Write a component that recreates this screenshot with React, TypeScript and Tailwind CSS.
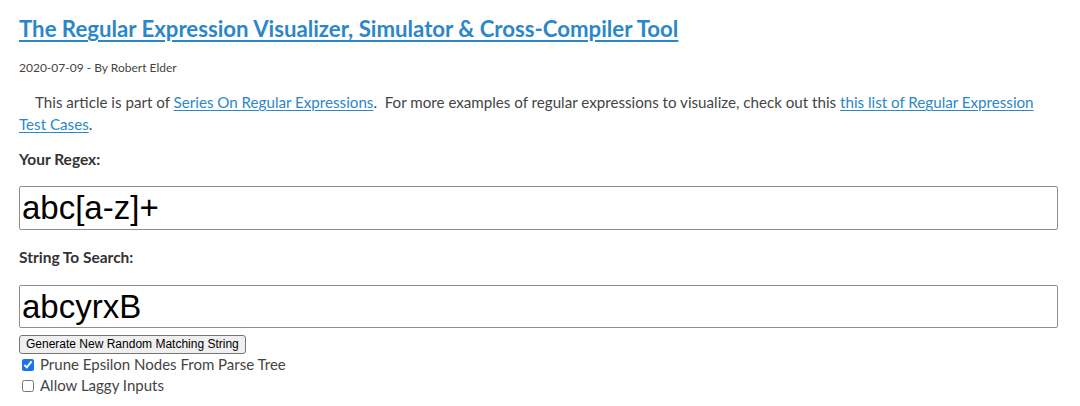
import React from "react";

export default function App() {
  const body = { fontFamily: "Lato, 'Noto Sans', sans-serif" };
  return (
    <div className="w-[1080px] h-[406px] bg-white overflow-hidden pl-[19px] pr-[23px] text-[#444]" style={body}>
      <h1 className="pt-[12px] text-[22.2px] leading-[34px] font-bold">
        <a href="#" className="text-[#2b87c8] underline underline-offset-[3px] decoration-[1.5px]">
          The Regular Expression Visualizer, Simulator &amp; Cross-Compiler Tool
        </a>
      </h1>
      <div className="mt-[14px] text-[12px] leading-[16px] text-[#444]">2020-07-09 - By Robert Elder</div>
      <p className="mt-[15px] text-[15.15px] leading-[22px] indent-[16px] text-[#444]">
        This article is part of{" "}
        <a href="#" className="text-[#2b87c8] underline underline-offset-2">Series On Regular Expressions</a>.&nbsp; For more examples of regular expressions to visualize, check out this{" "}
        <a href="#" className="text-[#2b87c8] underline underline-offset-2">this list of Regular Expression Test Cases</a>.
      </p>
      <div className="mt-[14px] text-[15.5px] leading-[20px] font-bold text-[#333]">Your Regex:</div>
      <input
        readOnly
        value="abc[a-z]+"
        className="mt-[17px] block w-[1039px] h-[44px] border border-[#8f8f8f] rounded-[2px] px-[2px] text-[33px] text-black outline-none"
        style={{ fontFamily: "'Liberation Sans', Arial, sans-serif" }}
      />
      <div className="mt-[17px] text-[15.5px] leading-[20px] font-bold text-[#333]">String To Search:</div>
      <input
        readOnly
        value="abcyrxB"
        className="mt-[18px] block w-[1039px] h-[43px] border border-[#8f8f8f] rounded-[2px] px-[2px] text-[33px] text-black outline-none"
        style={{ fontFamily: "'Liberation Sans', Arial, sans-serif" }}
      />
      <button
        className="mt-[7px] block h-[19px] px-[6px] text-[12px] leading-[17px] text-black bg-[#efefef] border border-[#767676] rounded-[3px]"
        style={{ fontFamily: "'Liberation Sans', Arial, sans-serif" }}
      >
        Generate New Random Matching String
      </button>
      <label className="mt-0 flex items-center h-[21px] text-[15px] text-[#444]">
        <input type="checkbox" defaultChecked className="w-[12px] h-[12px] ml-[3px] mr-[6px] accent-[#1a73e8]" />
        Prune Epsilon Nodes From Parse Tree
      </label>
      <label className="flex items-center h-[21px] text-[15px] text-[#444]">
        <input type="checkbox" className="w-[12px] h-[12px] ml-[3px] mr-[6px]" />
        Allow Laggy Inputs
      </label>
    </div>
  );
}
